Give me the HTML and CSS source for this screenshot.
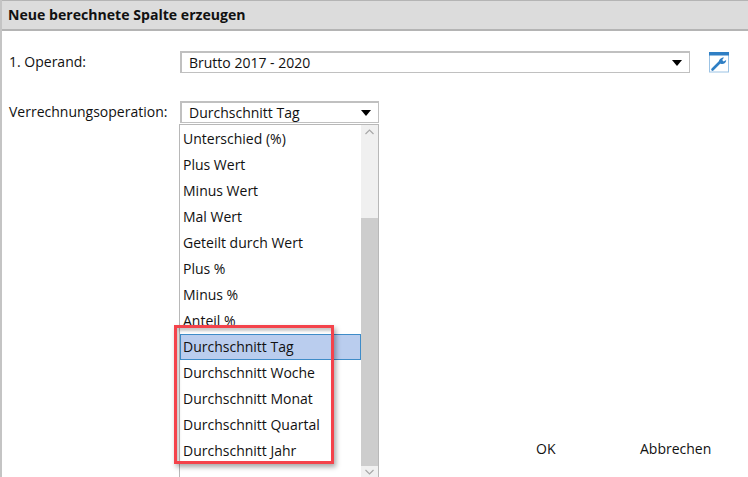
FILE: index.html
```html
<!DOCTYPE html>
<html lang="de">
<head>
<meta charset="utf-8">
<title>Neue berechnete Spalte erzeugen</title>
<link rel="stylesheet" href="styles.css">
</head>
<body>
<div class="dialog">
  <header class="title">Neue berechnete Spalte erzeugen</header>
  <div class="form">
    <div class="row row-first">
      <span class="label">1. Operand:</span>
      <div class="select select-wide"><span>Brutto 2017 - 2020</span><i class="arrow"></i></div>
      <svg class="tool" width="21" height="21" viewBox="0 0 21 21" aria-hidden="true">
        <rect x="0.5" y="0.5" width="19" height="19.5" fill="#fff" stroke="#9cc3e4"/>
        <rect x="0" y="0" width="20" height="3.5" fill="#2f7fc4"/>
        <path d="M3.5 17.5 L11.5 9.5" stroke="#2f7fc4" stroke-width="2.6" stroke-linecap="round"/>
        <path d="M10 11 C9.6 8 11.6 5.6 15 5.6 L13.2 8 L14.6 9.6 L17.2 8 C17.2 11 14.4 12.6 11.8 11.8 Z" fill="#2f7fc4"/>
      </svg>
    </div>
    <div class="row row-second">
      <span class="label">Verrechnungsoperation:</span>
      <div class="select select-short"><span>Durchschnitt Tag</span><i class="arrow"></i></div>
    </div>
    <div class="actions">
      <span class="action action-ok">OK</span>
      <span class="action">Abbrechen</span>
    </div>
  </div>
  <div class="popup">
    <ul class="options">
      <li>Unterschied (%)</li>
      <li>Plus Wert</li>
      <li>Minus Wert</li>
      <li>Mal Wert</li>
      <li>Geteilt durch Wert</li>
      <li>Plus %</li>
      <li>Minus %</li>
      <li>Anteil %</li>
      <li class="selected">Durchschnitt Tag</li>
      <li>Durchschnitt Woche</li>
      <li>Durchschnitt Monat</li>
      <li>Durchschnitt Quartal</li>
      <li>Durchschnitt Jahr</li>
    </ul>
    <div class="scrollbar">
      <svg class="chev" width="17" height="14" viewBox="0 0 17 14" aria-hidden="true"><path d="M4.5 9 L8.5 5 L12.5 9" fill="none" stroke="#a8a8a8" stroke-width="1.2"/></svg>
      <div class="track"></div>
      <div class="thumb"></div>
      <svg class="chev" width="17" height="12" viewBox="0 0 17 12" aria-hidden="true"><path d="M4.5 4 L8.5 8 L12.5 4" fill="none" stroke="#a8a8a8" stroke-width="1.2"/></svg>
    </div>
  </div>
  <div class="callout"></div>
</div>
</body>
</html>
```
FILE: styles.css
```css
html, body {
  margin: 0;
  padding: 0;
  background: #fff;
}
body {
  width: 748px;
  height: 477px;
  overflow: hidden;
  font-family: "Open Sans", "Noto Sans", sans-serif;
  font-size: 14px;
  color: #111;
}
.dialog {
  position: relative;
  width: 748px;
  height: 477px;
  box-sizing: border-box;
  border-left: 2px solid #c4c4c4;
  overflow: hidden;
}
.title {
  height: 28px;
  box-sizing: content-box;
  border-top: 1px solid #b4b4b4;
  border-bottom: 2px solid #b4b4b4;
  margin-left: -2px;
  padding-left: 8px;
  background: #dcdcdc;
  font-weight: 700;
  font-size: 14.1px;
  line-height: 28px;
  color: #111;
}
.form {
  display: flex;
  flex-direction: column;
  padding-left: 7px;
}
.row {
  display: flex;
  align-items: flex-start;
}
.row-first { margin-top: 20px; }
.row-second { margin-top: 28px; }
.label {
  width: 171px;
  line-height: 21px;
}
.select {
  display: flex;
  align-items: center;
  justify-content: space-between;
  height: 22px;
  box-sizing: border-box;
  border: 2px solid #c0c0c0;
  border-right-width: 1px;
  border-bottom-width: 1px;
  padding: 0 7px 0 7px;
}
.select-wide { width: 510px; }
.select-short { width: 199px; }
.arrow {
  width: 0;
  height: 0;
  border-left: 5.5px solid transparent;
  border-right: 5.5px solid transparent;
  border-top: 6px solid #000;
}
.tool {
  margin: 1px 0 0 19px;
}
.actions {
  display: flex;
  margin-top: 316px;
  padding-left: 527px;
  line-height: 20px;
}
.action-ok { width: 104px; }
.popup {
  position: absolute;
  left: 177px;
  top: 124px;
  width: 200px;
  height: 360px;
  box-sizing: border-box;
  border: 1px solid #b8b8b8;
  background: #fff;
  display: flex;
}
.options {
  list-style: none;
  margin: 0;
  padding: 1px 0 0 0;
  flex: 1;
}
.options li {
  height: 26px;
  box-sizing: border-box;
  padding-left: 3px;
  line-height: 26px;
  white-space: nowrap;
}
.options .selected {
  background: #bacdee;
  border: 1px solid #3f8cc8;
  padding-left: 2px;
  line-height: 24px;
}
.scrollbar {
  width: 17px;
  display: flex;
  flex-direction: column;
  background: #f0f0f0;
}
.chev { display: block; flex: none; }
.track { height: 79px; }
.thumb { height: 248px; background: #cdcdcd; }
.callout {
  position: absolute;
  left: 172px;
  top: 325px;
  width: 160px;
  height: 139px;
  box-sizing: border-box;
  border: 3px solid #f4434b;
  box-shadow: 2px 3px 5px rgba(0, 0, 0, 0.35), inset 2px 3px 3px rgba(0, 0, 0, 0.22);
}
```
